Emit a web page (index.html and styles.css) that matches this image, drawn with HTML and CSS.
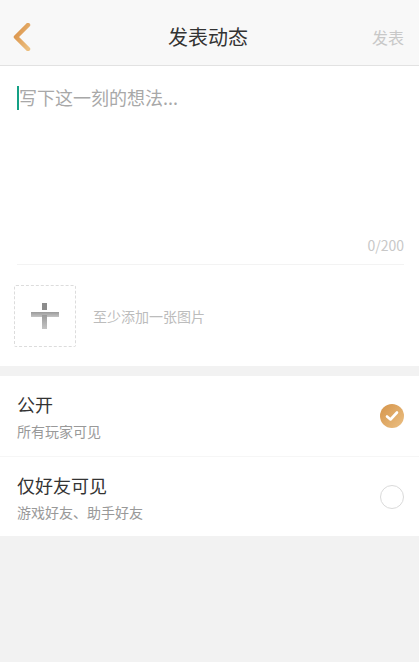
FILE: index.html
```html
<!DOCTYPE html>
<html lang="zh-CN">

<head>
    <meta charset="UTF-8">
    <meta name="viewport" content="width=device-width, initial-scale=1.0">
    <title>发表动态</title>

    <link rel="stylesheet" href="styles.css">
</head>

<body>
    <header class="topbar">
        <a class="back" href="#">
            <svg width="20" height="28" viewBox="0 0 20 28">
                <defs>
                    <linearGradient id="backGrad" x1="0" y1="0" x2="1" y2="1">
                        <stop offset="0" stop-color="#d98f45" />
                        <stop offset="1" stop-color="#ecbf7f" />
                    </linearGradient>
                </defs>
                <path d="M16 2 L4 14 L16 26" fill="none" stroke="url(#backGrad)" stroke-width="4.5" stroke-linecap="round" stroke-linejoin="round" />
            </svg>
        </a>
        <h1 class="title">发表动态</h1>
        <span class="publish">发表</span>
    </header>

    <section class="editor">
        <div class="input-area">
            <span class="caret"></span><span class="placeholder">写下这一刻的想法...</span>
        </div>
        <div class="counter">0/200</div>
        <div class="divider"></div>
        <div class="images">
            <div class="add-box">
                <svg width="28" height="26" viewBox="0 0 28 26">
                    <defs>
                        <linearGradient id="plusGrad" x1="0" y1="0" x2="0" y2="1">
                            <stop offset="0" stop-color="#9a9a9a" />
                            <stop offset="1" stop-color="#c4c4c4" />
                        </linearGradient>
                    </defs>
                    <rect x="11" y="0" width="5" height="7" fill="#8c8c8c" />
                    <rect x="0" y="9" width="28" height="5" fill="url(#plusGrad)" />
                    <rect x="11" y="12" width="5" height="14" fill="url(#plusGrad)" />
                </svg>
            </div>
            <span class="add-tip">至少添加一张图片</span>
        </div>
    </section>

    <section class="options">
        <div class="option">
            <div class="option-text">
                <div class="option-name">公开</div>
                <div class="option-desc">所有玩家可见</div>
            </div>
            <span class="radio checked">
                <svg width="14" height="12" viewBox="0 0 14 12">
                    <path d="M2 6.5 L5.5 9.5 L12 2.5" fill="none" stroke="#fff" stroke-width="2.6" stroke-linecap="round" stroke-linejoin="round" />
                </svg>
            </span>
        </div>
        <div class="option">
            <div class="option-text">
                <div class="option-name">仅好友可见</div>
                <div class="option-desc">游戏好友、助手好友</div>
            </div>
            <span class="radio"></span>
        </div>
    </section>
</body>

</html>
```

FILE: styles.css
```css
/* Global reset */

* {
    margin: 0;
    padding: 0;
    box-sizing: border-box;
}

body {
    font-family: 'Noto Sans CJK SC', 'Noto Sans', sans-serif;
    background-color: #f2f2f2;
    color: #333;
    width: 419px;
    min-height: 662px;
}

/* Top bar */

.topbar {
    height: 66px;
    background-color: #f8f8f8;
    border-bottom: 1px solid #e2e2e2;
    display: flex;
    align-items: center;
    justify-content: space-between;
    padding: 8px 15px 0 12px;
}

.back {
    display: flex;
    width: 60px;
}

.title {
    font-size: 20px;
    font-weight: normal;
    color: #333;
}

.publish {
    width: 60px;
    text-align: right;
    font-size: 16px;
    color: #c8c8c8;
}

/* Editor */

.editor {
    background-color: white;
}

.input-area {
    height: 168px;
    padding: 17px 17px 0;
    display: flex;
    align-items: flex-start;
}

.caret {
    display: inline-block;
    width: 2px;
    height: 24px;
    margin-top: 3px;
    background-color: #14a085;
}

.placeholder {
    font-size: 18px;
    line-height: 28px;
    color: #a8a8a8;
}

.counter {
    text-align: right;
    padding: 0 15px;
    font-size: 14px;
    line-height: 22px;
    color: #c8c8c8;
}

.divider {
    height: 1px;
    margin: 8px 15px 0 17px;
    background-color: #f3f3f3;
}

.images {
    display: flex;
    align-items: center;
    padding: 20px 14px 19px;
}

.add-box {
    width: 62px;
    height: 62px;
    border: 1px dashed #dcdcdc;
    border-radius: 2px;
    display: flex;
    align-items: center;
    justify-content: center;
}

.add-tip {
    margin-left: 17px;
    font-size: 14px;
    color: #bcbcbc;
}

/* Visibility options */

.options {
    margin-top: 10px;
    background-color: white;
}

.option {
    height: 80px;
    display: flex;
    align-items: center;
    justify-content: space-between;
    padding: 0 15px 0 17px;
}

.option + .option {
    border-top: 1px solid #f6f6f6;
}

.option-name {
    font-size: 18px;
    line-height: 26px;
    color: #333;
}

.option-desc {
    margin-top: 4px;
    font-size: 14px;
    line-height: 20px;
    color: #999;
}

.radio {
    width: 24px;
    height: 24px;
    border-radius: 50%;
    border: 1px solid #dadada;
    display: flex;
    align-items: center;
    justify-content: center;
}

.radio.checked {
    border: none;
    background: linear-gradient(135deg, #d5944a, #ebc084);
}
```
